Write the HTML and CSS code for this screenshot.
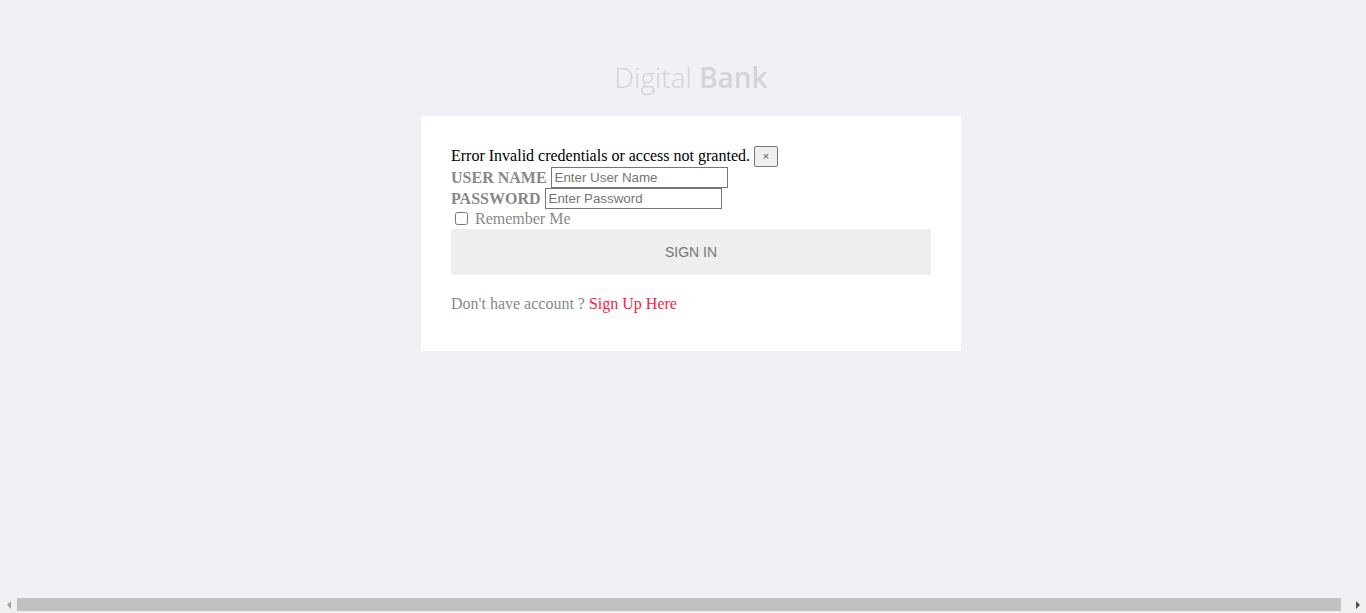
FILE: index.html
```html
<!DOCTYPE html>
<html>
<head>
<meta charset="utf-8">
<title>Digital Bank</title>
<link rel="stylesheet" href="styles.css">
</head>
<body>
<div class="page">
  <h1 class="brand">Digital <b>Bank</b></h1>
  <div class="card">
    <div class="alert">Error Invalid credentials or access not granted. <button class="close" type="button">×</button></div>
    <form class="form">
      <div class="row"><label class="lbl">USER NAME</label><input class="field" type="text" placeholder="Enter User Name"></div>
      <div class="row"><label class="lbl">PASSWORD</label><input class="field" type="password" placeholder="Enter Password"></div>
      <div class="row remember"><input class="check" type="checkbox"><span>Remember Me</span></div>
      <button class="signin" type="button">SIGN IN</button>
    </form>
    <p class="signup">Don't have account ? <a href="#">Sign Up Here</a></p>
  </div>
</div>
<div class="hscroll" aria-hidden="true">
  <span class="arrow left"></span>
  <span class="track"><span class="thumb"></span></span>
  <span class="arrow right"></span>
</div>
</body>
</html>
```
FILE: styles.css
```css
html { background: #f0f1f6; }
body {
  margin: 8px;
  background: #f0f1f6;
  font-family: "Liberation Serif", "Times New Roman", serif;
  font-size: 16px;
}
.page {
  width: 100vw;
  display: flex;
  flex-direction: column;
  align-items: center;
}
.brand {
  margin: 50px 0 20px;
  font-family: "Open Sans", sans-serif;
  font-weight: 300;
  font-size: 28px;
  line-height: 38px;
  color: #d4d4d6;
}
.brand b { font-weight: 600; }
.card {
  width: 480px;
  background: #fff;
  padding: 30px 30px 20px;
}
.alert {
  display: flex;
  align-items: center;
  gap: 4px;
  height: 20px;
  margin-bottom: 1px;
  color: #000;
}
.close {
  font-size: 11px;
  font-family: "Liberation Sans", Arial, sans-serif;
  color: #555;
  background: #efefef;
  border: 1px solid #767676;
  border-radius: 2px;
  padding: 0;
  height: 21px;
  width: 24px;
}
.row {
  display: flex;
  align-items: center;
  gap: 4px;
  height: 21px;
  color: #888;
}
.lbl { font-weight: bold; }
.field {
  width: 177px;
  height: 21px;
  box-sizing: border-box;
  border: 1px solid #767676;
  padding: 1px 3px;
  margin: 0;
  font-family: "Liberation Sans", Arial, sans-serif;
  font-size: 13.33px;
  border-radius: 0;
}
.field::placeholder { color: #757575; }
.remember { height: 20px; gap: 7px; }
.check { margin: 0 0 0 4px; width: 13px; height: 13px; position: relative; top: -1px; }
.signin {
  display: block;
  width: 100%;
  height: 46px;
  border: none;
  background: #eeeeee;
  color: #777;
  font-family: "Liberation Sans", Arial, sans-serif;
  font-size: 14px;
}
.signup {
  margin: 20px 0 18px;
  color: #888;
}
.signup a { color: #ff1a47; text-decoration: none; }

.hscroll {
  position: fixed;
  left: 0;
  right: 0;
  bottom: 0;
  height: 15px;
  background: #f0f0f0;
  display: flex;
  align-items: flex-start;
}
.arrow {
  width: 17px;
  height: 13px;
  display: flex;
  align-items: center;
  justify-content: center;
}
.arrow::before {
  content: "";
  border-top: 4px solid transparent;
  border-bottom: 4px solid transparent;
}
.arrow.left::before { border-right: 4px solid #a3a3a3; }
.arrow.right::before { border-left: 4px solid #505050; }
.track {
  flex: 1;
  height: 13px;
  display: flex;
}
.thumb {
  width: calc(100% - 8px);
  background: #c1c1c1;
}
```
